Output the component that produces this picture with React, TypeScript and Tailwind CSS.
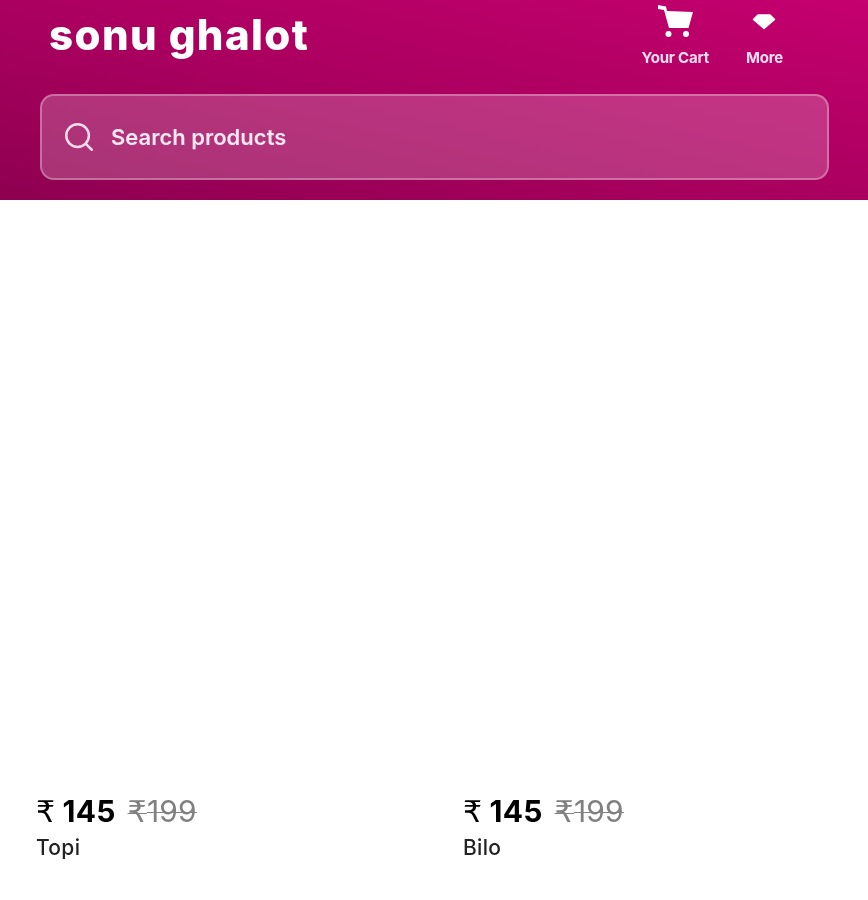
import { Search } from "lucide-react";

const products = [
  { name: "Topi", price: 145, mrp: 199 },
  { name: "Bilo", price: 145, mrp: 199 },
];

function CartIcon() {
  return (
    <svg width="36" height="36" viewBox="0 0 36 36" fill="white" className="translate-x-[1px]">
      <path d="M0 1 L8 2.5 L9 7 L35 8 L30.5 24 L11 24 L6 6 L0 5 Z" />
      <circle cx="10.5" cy="30" r="3" />
      <circle cx="28" cy="30" r="3" />
    </svg>
  );
}

function HeartIcon() {
  return (
    <svg width="24" height="18" viewBox="0 0 24 18" fill="white" stroke="white" strokeWidth="1.5" strokeLinejoin="round">
      <path d="M6 2 L18 2 L22.5 6.5 L12 15.5 L1.5 6.5 Z" />
    </svg>
  );
}

function Header() {
  return (
    <header className="h-[200px] bg-gradient-to-tr from-[#8e0050] via-[#ab0060] to-[#c5006f] px-10 pt-[2px] font-['Inter',sans-serif] text-white">
      <div className="blur-[0.5px]">
        <div className="flex h-[92px] items-start justify-between">
          <h1 className="ml-[9px] mt-[5px] text-[42px] font-extrabold leading-[56px] tracking-[1.4px]">
            sonu ghalot
          </h1>
          <nav className="mr-[45px] flex items-start gap-[37px] pt-[2px]">
            <div className="flex flex-col items-center">
              <CartIcon />
              <span className="mt-[8px] text-[15px] font-bold leading-[20px] tracking-[-0.2px] text-[#fbdcec]">
                Your Cart
              </span>
            </div>
            <div className="flex flex-col items-center">
              <div className="flex h-[36px] items-start pt-[9px]">
                <HeartIcon />
              </div>
              <span className="mt-[8px] text-[15px] font-bold leading-[20px] tracking-[-0.2px] text-[#fbdcec]">
                More
              </span>
            </div>
          </nav>
        </div>
        <div className="flex h-[86px] w-[789px] items-center gap-[15px] rounded-[14px] border-2 border-white/30 bg-white/20 pl-[20px]">
          <Search size={34} strokeWidth={1.75} className="text-[#fbdcec]" />
          <span className="text-[22px] font-semibold text-[#fde8f2]">Search products</span>
        </div>
      </div>
    </header>
  );
}

export default function App() {
  return (
    <div className="h-[900px] overflow-hidden bg-white">
      <Header />
      <main className="grid grid-cols-[427px_1fr] pl-[36px] pt-[592px] font-['Inter',sans-serif] blur-[0.5px]">
        {products.map((p) => (
          <div key={p.name}>
            <div className="flex items-baseline gap-[12px] leading-[38px]">
              <span className="text-[30px] font-bold tracking-[0.2px] text-black">
                <span className="font-['DejaVu_Sans',sans-serif] font-normal">₹</span> {p.price}
              </span>
              <span className="text-[30px] tracking-[0.2px] text-[#808080] line-through decoration-1">
                <span className="font-['DejaVu_Sans',sans-serif]">₹</span>
                {p.mrp}
              </span>
            </div>
            <p className="mt-[3px] text-[21px] font-medium leading-[28px] tracking-[0.3px] text-[#222]">{p.name}</p>
          </div>
        ))}
      </main>
    </div>
  );
}
